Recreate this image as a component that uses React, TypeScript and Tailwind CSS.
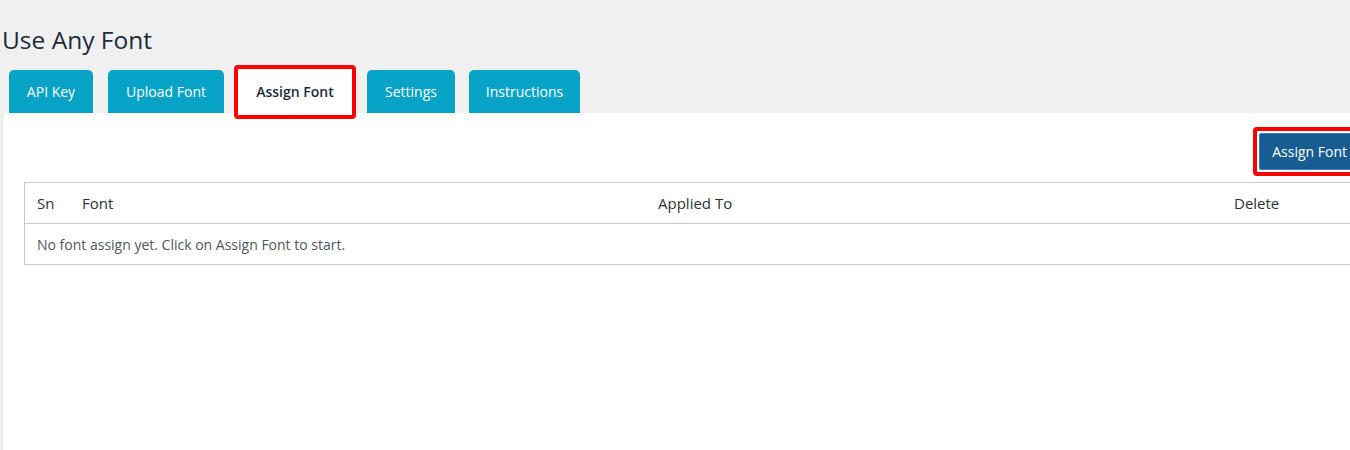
import React from "react";

const tabs = [
  { label: "API Key", w: "w-[84px]", ml: "ml-[9px]" },
  { label: "Upload Font", w: "w-[116px]", ml: "ml-[15px]" },
  { label: "Assign Font", w: "w-[118px]", ml: "ml-[12px]", active: true },
  { label: "Settings", w: "w-[88px]", ml: "ml-[13px]" },
  { label: "Instructions", w: "w-[111px]", ml: "ml-[14px]" },
];

export default function App() {
  return (
    <div
      className="w-[1350px] h-[450px] overflow-hidden bg-[#f0f0f1] text-[#3c434a]"
      style={{ fontFamily: '"Open Sans", "Noto Sans", sans-serif' }}
    >
      <div className="w-[1374px]">
        <h1 className="pl-[2px] pt-[24px] h-[70px] text-[24.5px] leading-[32px] text-[#1d2b3b] font-normal">
          Use Any Font
        </h1>
        <div className="flex items-end h-[43px]">
          {tabs.map((t) => (
            <div
              key={t.label}
              className={`relative ${t.w} ${t.ml} h-[43px] rounded-t-[5px] flex items-center justify-center text-[14px] ${
                t.active
                  ? "bg-white text-[#1d2b3b] font-semibold"
                  : "bg-[#06a3c6] text-white"
              }`}
            >
              {t.label}
              {t.active && (
                <span className="absolute left-[-2px] right-[-2px] top-[-5px] bottom-[-6px] border-[4px] border-[#f00] rounded-[4px] pointer-events-none" />
              )}
            </div>
          ))}
        </div>
        <div className="ml-[2px] bg-white rounded-tl-[6px] border-l border-[#e2e2e2] h-[340px] pt-[20px] pl-[21px] pr-[14px]">
          <div className="flex justify-end">
            <div className="relative">
              <button className="h-[37px] px-[12px] bg-[#175d92] border border-[#3c7fc0] rounded-[2px] text-white text-[14px] leading-[20px]">
                Assign Font
              </button>
              <span className="absolute left-[-6px] right-[-6px] top-[-6px] bottom-[-6px] border-[4px] border-[#f00] rounded-[4px] pointer-events-none" />
            </div>
          </div>
          <div className="mt-[12px] border border-[#c8c8c8]">
            <div className="grid grid-cols-[45px_576px_576px_1fr] h-[41px] items-center border-b border-[#c8c8c8] text-[15px] text-[#2c3338]">
              <div className="pl-[12px]">Sn</div>
              <div className="pl-[12px]">Font</div>
              <div className="pl-[12px]">Applied To</div>
              <div className="pl-[12px]">Delete</div>
            </div>
            <div className="h-[40px] flex items-center pl-[12px] text-[14px] text-[#50575e]">
              No font assign yet. Click on Assign Font to start.
            </div>
          </div>
        </div>
      </div>
    </div>
  );
}
